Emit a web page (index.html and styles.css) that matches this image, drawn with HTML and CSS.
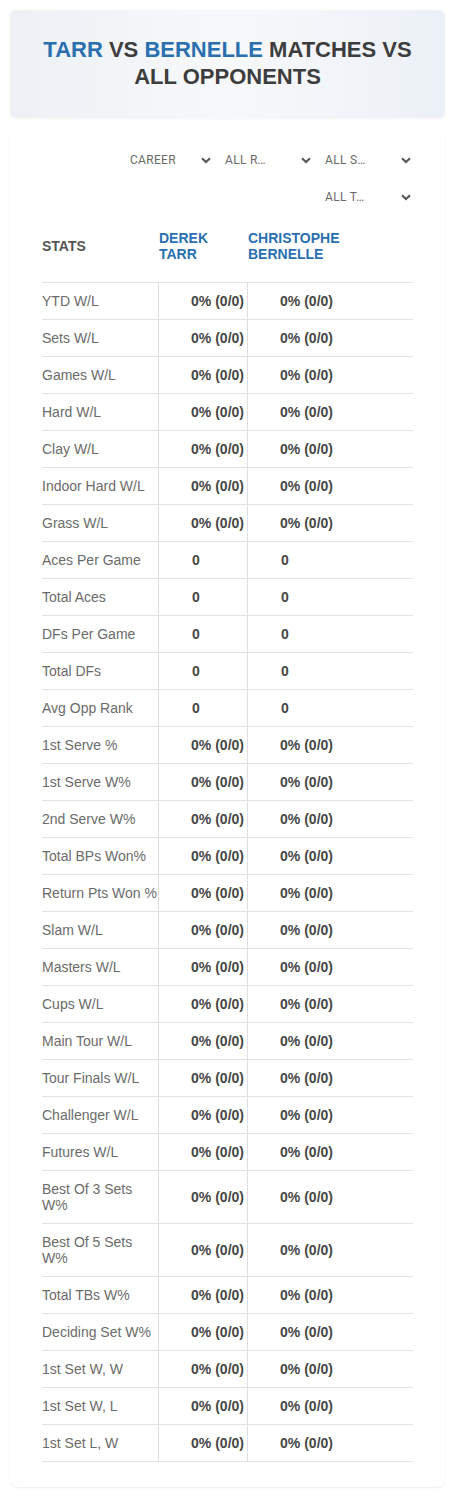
FILE: index.html
```html
<!DOCTYPE html>
<html lang="en">
<head>
    <meta charset="UTF-8">
    <meta name="viewport" content="width=device-width, initial-scale=1.0">
    <title>Tarr vs Bernelle</title>
    <link rel="stylesheet" href="styles.css">
</head>
<body>
    <div class="banner">
        <h1><span class="blue">TARR</span> VS <span class="blue">BERNELLE</span> MATCHES VS ALL OPPONENTS</h1>
    </div>
    <div class="card">
        <div class="filters">
            <div class="dropdown first"><span>CAREER</span><svg width="10" height="7" viewBox="0 0 10 7"><path d="M1 1.2 L5 5 L9 1.2" fill="none" stroke="#555" stroke-width="2"/></svg></div>
            <div class="dropdown"><span>ALL R…</span><svg width="10" height="7" viewBox="0 0 10 7"><path d="M1 1.2 L5 5 L9 1.2" fill="none" stroke="#555" stroke-width="2"/></svg></div>
            <div class="dropdown"><span>ALL S…</span><svg width="10" height="7" viewBox="0 0 10 7"><path d="M1 1.2 L5 5 L9 1.2" fill="none" stroke="#555" stroke-width="2"/></svg></div>
            <div class="dropdown"><span>ALL T…</span><svg width="10" height="7" viewBox="0 0 10 7"><path d="M1 1.2 L5 5 L9 1.2" fill="none" stroke="#555" stroke-width="2"/></svg></div>
        </div>
        <div class="stats">
            <div class="row head">
                <div class="cell label">STATS</div>
                <div class="cell player">DEREK<br>TARR</div>
                <div class="cell player">CHRISTOPHE<br>BERNELLE</div>
                <div class="cell"></div>
            </div>
            <div class="row"><div class="cell label">YTD W/L</div><div class="cell val">0% (0/0)</div><div class="cell val">0% (0/0)</div><div class="cell"></div></div>
            <div class="row"><div class="cell label">Sets W/L</div><div class="cell val">0% (0/0)</div><div class="cell val">0% (0/0)</div><div class="cell"></div></div>
            <div class="row"><div class="cell label">Games W/L</div><div class="cell val">0% (0/0)</div><div class="cell val">0% (0/0)</div><div class="cell"></div></div>
            <div class="row"><div class="cell label">Hard W/L</div><div class="cell val">0% (0/0)</div><div class="cell val">0% (0/0)</div><div class="cell"></div></div>
            <div class="row"><div class="cell label">Clay W/L</div><div class="cell val">0% (0/0)</div><div class="cell val">0% (0/0)</div><div class="cell"></div></div>
            <div class="row"><div class="cell label">Indoor Hard W/L</div><div class="cell val">0% (0/0)</div><div class="cell val">0% (0/0)</div><div class="cell"></div></div>
            <div class="row"><div class="cell label">Grass W/L</div><div class="cell val">0% (0/0)</div><div class="cell val">0% (0/0)</div><div class="cell"></div></div>
            <div class="row"><div class="cell label">Aces Per Game</div><div class="cell num">0</div><div class="cell num">0</div><div class="cell"></div></div>
            <div class="row"><div class="cell label">Total Aces</div><div class="cell num">0</div><div class="cell num">0</div><div class="cell"></div></div>
            <div class="row"><div class="cell label">DFs Per Game</div><div class="cell num">0</div><div class="cell num">0</div><div class="cell"></div></div>
            <div class="row"><div class="cell label">Total DFs</div><div class="cell num">0</div><div class="cell num">0</div><div class="cell"></div></div>
            <div class="row"><div class="cell label">Avg Opp Rank</div><div class="cell num">0</div><div class="cell num">0</div><div class="cell"></div></div>
            <div class="row"><div class="cell label">1st Serve %</div><div class="cell val">0% (0/0)</div><div class="cell val">0% (0/0)</div><div class="cell"></div></div>
            <div class="row"><div class="cell label">1st Serve W%</div><div class="cell val">0% (0/0)</div><div class="cell val">0% (0/0)</div><div class="cell"></div></div>
            <div class="row"><div class="cell label">2nd Serve W%</div><div class="cell val">0% (0/0)</div><div class="cell val">0% (0/0)</div><div class="cell"></div></div>
            <div class="row"><div class="cell label">Total BPs Won%</div><div class="cell val">0% (0/0)</div><div class="cell val">0% (0/0)</div><div class="cell"></div></div>
            <div class="row"><div class="cell label">Return Pts Won %</div><div class="cell val">0% (0/0)</div><div class="cell val">0% (0/0)</div><div class="cell"></div></div>
            <div class="row"><div class="cell label">Slam W/L</div><div class="cell val">0% (0/0)</div><div class="cell val">0% (0/0)</div><div class="cell"></div></div>
            <div class="row"><div class="cell label">Masters W/L</div><div class="cell val">0% (0/0)</div><div class="cell val">0% (0/0)</div><div class="cell"></div></div>
            <div class="row"><div class="cell label">Cups W/L</div><div class="cell val">0% (0/0)</div><div class="cell val">0% (0/0)</div><div class="cell"></div></div>
            <div class="row"><div class="cell label">Main Tour W/L</div><div class="cell val">0% (0/0)</div><div class="cell val">0% (0/0)</div><div class="cell"></div></div>
            <div class="row"><div class="cell label">Tour Finals W/L</div><div class="cell val">0% (0/0)</div><div class="cell val">0% (0/0)</div><div class="cell"></div></div>
            <div class="row"><div class="cell label">Challenger W/L</div><div class="cell val">0% (0/0)</div><div class="cell val">0% (0/0)</div><div class="cell"></div></div>
            <div class="row"><div class="cell label">Futures W/L</div><div class="cell val">0% (0/0)</div><div class="cell val">0% (0/0)</div><div class="cell"></div></div>
            <div class="row"><div class="cell label">Best Of 3 Sets W%</div><div class="cell val">0% (0/0)</div><div class="cell val">0% (0/0)</div><div class="cell"></div></div>
            <div class="row"><div class="cell label">Best Of 5 Sets W%</div><div class="cell val">0% (0/0)</div><div class="cell val">0% (0/0)</div><div class="cell"></div></div>
            <div class="row"><div class="cell label">Total TBs W%</div><div class="cell val">0% (0/0)</div><div class="cell val">0% (0/0)</div><div class="cell"></div></div>
            <div class="row"><div class="cell label">Deciding Set W%</div><div class="cell val">0% (0/0)</div><div class="cell val">0% (0/0)</div><div class="cell"></div></div>
            <div class="row"><div class="cell label">1st Set W, W</div><div class="cell val">0% (0/0)</div><div class="cell val">0% (0/0)</div><div class="cell"></div></div>
            <div class="row"><div class="cell label">1st Set W, L</div><div class="cell val">0% (0/0)</div><div class="cell val">0% (0/0)</div><div class="cell"></div></div>
            <div class="row"><div class="cell label">1st Set L, W</div><div class="cell val">0% (0/0)</div><div class="cell val">0% (0/0)</div><div class="cell"></div></div>
        </div>
    </div>
</body>
</html>
```

FILE: styles.css
```css
body {
    font-family: "Liberation Sans", Arial, sans-serif;
    margin: 0;
    padding: 10px;
    background-color: #fff;
    color: #444;
}
.banner {
    background: linear-gradient(90deg, #edf1f5 0%, #f7f8fa 50%, #ecf1f7 100%);
    border-radius: 6px;
    box-shadow: 0 1px 3px rgba(0, 0, 0, 0.05);
    padding: 26px 20px 27px;
    height: 55px;
}
.banner h1 {
    margin: 0;
    text-align: center;
    font-size: 22px;
    line-height: 27px;
    font-weight: bold;
    color: #3d3d3d;
}
.blue {
    color: #2a70b0;
}
.card {
    margin-top: 10px;
    background: #fff;
    border-radius: 8px;
    box-shadow: 0 1px 2px rgba(0, 0, 0, 0.07);
    padding: 17px 32px 25px;
}
.filters {
    display: flex;
    flex-wrap: wrap;
    justify-content: flex-end;
    column-gap: 5px;
    row-gap: 7px;
    margin-right: -2px;
}
.dropdown {
    width: 95px;
    height: 30px;
    box-sizing: border-box;
    padding: 0 4px 0 5px;
    display: flex;
    align-items: center;
    justify-content: space-between;
    font-family: Roboto, "Liberation Sans", sans-serif;
    font-size: 12px;
    letter-spacing: 0.3px;
    color: #6a6a6a;
}
.dropdown.first {
    padding-left: 10px;
}
.stats {
    margin-top: 10px;
}
.row {
    display: grid;
    grid-template-columns: 116px 89px 89px 1fr;
    border-bottom: 1px solid #e3e3e3;
}
.cell {
    padding: 10px 0;
    font-size: 14px;
    line-height: 16px;
    display: flex;
    align-items: center;
}
.row .cell:nth-child(2),
.row .cell:nth-child(3) {
    border-left: 1px solid #dedede;
}
.label {
    color: #6b6b6b;
}
.val {
    justify-content: flex-end;
    padding-right: 3px;
    font-weight: bold;
    color: #474747;
}
.num {
    padding-left: 33px;
    font-weight: bold;
    color: #474747;
}
.head .cell {
    padding: 8px 0 20px;
    font-weight: bold;
}
.head .cell.label {
    color: #555;
}
.head .cell:nth-child(2),
.head .cell:nth-child(3) {
    border-left: none;
    padding-left: 1px;
}
.player {
    color: #2a70b0;
}
```
